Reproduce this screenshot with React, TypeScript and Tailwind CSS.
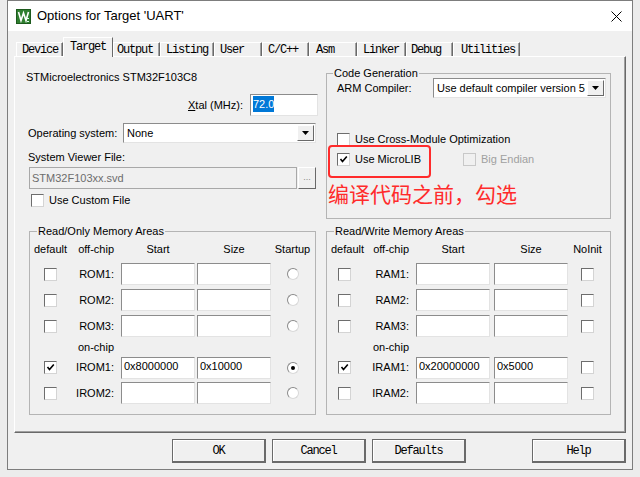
import React from "react";

const sans = "font-['Liberation_Sans',Arial,sans-serif]";
const mono = "font-['Liberation_Mono','Courier_New',monospace]";

const Check = ({ checked = false, disabled = false }: { checked?: boolean; disabled?: boolean }) => (
  <span
    className={
      disabled
        ? "flex h-[13px] w-[13px] shrink-0 items-center justify-center border border-[#c8c8c8] bg-[#f0f0f0]"
        : "flex h-[13px] w-[13px] shrink-0 items-center justify-center border border-t-[#6d6d6d] border-l-[#6d6d6d] border-b-[#d4d4d4] border-r-[#d4d4d4] bg-white"
    }
  >
    {checked && (
      <svg width="9" height="9" viewBox="0 0 9 9">
        <path d="M1.5 4 L3.5 6.5 L7.8 1.5" fill="none" stroke="#000" strokeWidth="1.6" />
      </svg>
    )}
  </span>
);

const Radio = ({ on = false }: { on?: boolean }) => (
  <span className="flex h-[12px] w-[12px] items-center justify-center rounded-full border border-t-[#8a8a8a] border-l-[#8a8a8a] border-b-[#d8d8d8] border-r-[#d8d8d8] bg-white">
    {on && <span className="h-[4px] w-[4px] rounded-full bg-black" />}
  </span>
);

const Field = ({ value = "", className = "" }: { value?: React.ReactNode; className?: string }) => (
  <div
    className={`flex h-[22px] shrink-0 items-center border border-t-[#8c8c8c] border-l-[#8c8c8c] border-b-[#e3e3e3] border-r-[#e3e3e3] bg-white pl-[2px] pb-[2px] ${className}`}
  >
    {value}
  </div>
);

const Arrow = () => (
  <span className="flex h-full w-[17px] items-center justify-center border border-t-white border-l-white border-b-[#696969] border-r-[#696969] bg-[#f0f0f0]">
    <svg width="7" height="4" viewBox="0 0 7 4">
      <path d="M0 0 H7 L3.5 4 Z" fill="#000" />
    </svg>
  </span>
);

const Select = ({ value, className }: { value: string; className: string }) => (
  <div
    className={`flex h-[20px] shrink-0 items-stretch border border-t-[#8c8c8c] border-l-[#8c8c8c] border-b-[#e3e3e3] border-r-[#e3e3e3] bg-white p-[1px] ${className}`}
  >
    <span className="flex flex-1 items-center pl-[2px]">{value}</span>
    <Arrow />
  </div>
);

const Btn = ({ label }: { label: string }) => (
  <div
    className={`flex h-[24px] w-[94px] items-center justify-center border border-[#6a6a6a] border-b-2 border-r-2 bg-[#f0f0f0] shadow-[inset_1px_1px_0_#fff] ${mono} text-[12px] tracking-[-1.2px] text-black`}
  >
    {label}
  </div>
);

const tabs: [string, string, string][] = [
  ["Device", "w-[47px]", "pl-[5px]"],
  ["Target", "w-[50px]", "pl-[6px]"],
  ["Output", "w-[47px]", "pl-[3px]"],
  ["Listing", "w-[54px]", "pl-[5px]"],
  ["User", "w-[48px]", "pl-[5px]"],
  ["C/C++", "w-[47px]", "pl-[5px]"],
  ["Asm", "w-[48px]", "pl-[6px]"],
  ["Linker", "w-[49px]", "pl-[5px]"],
  ["Debug", "w-[47px]", "pl-[4px]"],
  ["Utilities", "w-[67px]", "pl-[7px]"],
];

type Row = { label?: string; head?: string; checked?: boolean; start?: string; size?: string; on?: boolean; h: string };

const romRows: Row[] = [
  { label: "ROM1:", h: "h-[26px]" },
  { label: "ROM2:", h: "h-[26px]" },
  { label: "ROM3:", h: "h-[26px]" },
  { head: "on-chip", h: "h-[16px]" },
  { label: "IROM1:", checked: true, start: "0x8000000", size: "0x10000", on: true, h: "h-[25px]" },
  { label: "IROM2:", h: "h-[26px]" },
];

const ramRows: Row[] = [
  { label: "RAM1:", h: "h-[26px]" },
  { label: "RAM2:", h: "h-[26px]" },
  { label: "RAM3:", h: "h-[26px]" },
  { head: "on-chip", h: "h-[16px]" },
  { label: "IRAM1:", checked: true, start: "0x20000000", size: "0x5000", h: "h-[25px]" },
  { label: "IRAM2:", h: "h-[26px]" },
];

const MemGroup = ({
  title,
  rows,
  lastHead,
  radio,
  c1,
  c2,
  gap,
  last,
}: {
  title: string;
  rows: Row[];
  lastHead: string;
  radio: boolean;
  c1: string;
  c2: string;
  gap: string;
  last: string;
}) => (
  <div className="relative h-[184px] border border-[#b4b4b4] pt-[9px]">
    <span className="absolute -top-[8px] left-[7px] bg-[#f0f0f0] px-[1px] leading-[14px]">{title}</span>
    <div className="flex h-[16px] items-center whitespace-nowrap">
      <span className={`${c1} pl-[4px]`}>default</span>
      <span className={`${c2} text-right`}>off-chip</span>
      <span className="ml-[7px] w-[74px] text-center">Start</span>
      <span className={`${gap} w-[74px] text-center`}>Size</span>
      <span className={`${last} text-center`}>{lastHead}</span>
    </div>
    <div className="mt-[4px]">
      {rows.map((r, i) =>
        r.head ? (
          <div key={i} className={`flex ${r.h} items-center`}>
            <span className={c1} />
            <span className={`${c2} text-right whitespace-nowrap`}>{r.head}</span>
          </div>
        ) : (
          <div key={i} className={`flex ${r.h} items-center`}>
            <span className={`${c1} flex justify-center`}>
              <Check checked={r.checked} />
            </span>
            <span className={`${c2} text-right`}>{r.label}</span>
            <Field className="ml-[7px] w-[74px]" value={r.start} />
            <Field className={`${gap} w-[74px]`} value={r.size} />
            <span className={`${last} flex justify-center`}>{radio ? <Radio on={r.on} /> : <Check />}</span>
          </div>
        )
      )}
    </div>
  </div>
);

export default function App() {
  return (
    <div className={`h-[477px] w-[640px] bg-[#ececec] pl-[7px] ${sans} text-[11px] text-black`}>
      <div className="flex h-[470px] w-[626px] flex-col border border-[#7d7d7d] bg-[#f0f0f0]">
        {/* title bar */}
        <div className="flex h-[30px] shrink-0 items-center bg-white">
          <svg className="ml-[8px]" width="15" height="15" viewBox="0 0 15 15">
            <rect x="0" y="0" width="15" height="15" fill="#2f7f2f" />
            <rect x="0.5" y="0.5" width="14" height="14" fill="none" stroke="#1d5a1d" />
            <path d="M2.5 3 L5 11.5 L7.5 4 L10 11.5 L12.5 3" fill="none" stroke="#fff" strokeWidth="1.6" />
            <path d="M10.5 9.5 H13 M11 12.5 H13" stroke="#dfe" strokeWidth="1" />
          </svg>
          <span className="ml-[6px] text-[13px]">Options for Target 'UART'</span>
          <svg className="ml-auto mr-[10px]" width="11" height="11" viewBox="0 0 11 11">
            <path d="M0.5 0.5 L10.5 10.5 M10.5 0.5 L0.5 10.5" stroke="#000" strokeWidth="1" />
          </svg>
        </div>

        {/* tabs */}
        <div className={`ml-[8px] mt-[6px] flex h-[19px] items-end ${mono} text-[12px] tracking-[-1.2px]`}>
          {tabs.map(([t, w, pl]) =>
            t === "Target" ? (
              <div
                key={t}
                className={`relative z-10 -mb-px flex h-[20px] ${w} ${pl} items-center border-l border-t border-r border-l-white border-t-white border-r-[#696969] bg-[#f0f0f0] pb-[2px]`}
              >
                {t}
              </div>
            ) : (
              <div
                key={t}
                className={`flex h-[14px] ${w} ${pl} items-center border-l border-t border-r border-l-white border-t-white border-r-[#696969] bg-[#f0f0f0] shadow-[inset_-1px_0_0_#a0a0a0]`}
              >
                {t}
              </div>
            )
          )}
        </div>

        {/* panel */}
        <div className="mx-[6px] h-[377px] shrink-0 border border-t-white border-l-white border-b-[#696969] border-r-[#696969] pl-[14px] shadow-[inset_-1px_-1px_0_#a0a0a0]">
          <div className="flex h-[162px] gap-[10px]">
            {/* left column */}
            <div className="w-[287px] pt-[13px]">
              <div className="-ml-[3px] h-[14px] leading-[14px] whitespace-nowrap">STMicroelectronics STM32F103C8</div>
              <div className="-mr-[2px] mt-[10px] flex h-[22px] items-center justify-end">
                <span className="mr-[7px]">
                  <span className="underline">X</span>tal (MHz):
                </span>
                <Field className="w-[68px]" value={<span className="bg-[#0078d7] text-white">72.0</span>} />
              </div>
              <div className="-ml-[1px] mt-[7px] flex h-[20px] items-center">
                <span className="w-[96px]">Operating system:</span>
                <Select className="w-[193px]" value="None" />
              </div>
              <div className="-ml-[1px] mt-[7px] h-[14px] leading-[14px]">System Viewer File:</div>
              <div className="mt-[3px] flex h-[22px]">
                <div className="flex w-[270px] items-center border border-[#a8a8a8] bg-[#f0f0f0] pl-[2px] text-[#6d6d6d]">
                  STM32F103xx.svd
                </div>
                <div className="ml-px flex w-[18px] items-center justify-center border border-t-white border-l-white border-b-[#696969] border-r-[#696969] bg-[#f0f0f0] text-[9px] text-[#8a8a8a]">
                  ...
                </div>
              </div>
              <div className="mt-[4px] flex h-[14px] items-center pl-[2px]">
                <Check />
                <span className="ml-[5px]">Use Custom File</span>
              </div>
            </div>

            {/* right column */}
            <div className="w-[285px] pt-[16px]">
              <div className="relative h-[146px] border border-[#b4b4b4] pl-[10px] pt-[4px]">
                <span className="absolute -top-[8px] left-[6px] bg-[#f0f0f0] px-[1px] leading-[14px]">Code Generation</span>
                <div className="flex h-[20px] items-center">
                  <span className="w-[96px]">ARM Compiler:</span>
                  <Select className="w-[173px]" value="Use default compiler version 5" />
                </div>
                <div className="mt-[34px] flex h-[14px] items-center">
                  <Check />
                  <span className="ml-[5px]">Use Cross-Module Optimization</span>
                </div>
                <div className="mt-[6px] flex h-[14px] items-center">
                  <div className="flex w-[126px] items-center">
                    <Check checked />
                    <span className="ml-[5px]">Use MicroLIB</span>
                  </div>
                  <Check disabled />
                  <span className="ml-[5px] text-[#a0a0a0]">Big Endian</span>
                </div>
                <div className="-ml-[9px] mt-[14px] h-[26px] font-['Noto_Sans_CJK_SC',sans-serif] text-[21px] leading-[26px] text-[#ff2b2b]">
                  编译代码之前，勾选
                </div>
                <div className="absolute left-[1px] top-[71px] h-[33px] w-[103px] rounded-[4px] border-2 border-[#ff2b2b]" />
              </div>
            </div>
          </div>

          <div className="mt-[12px] flex gap-[10px]">
            <div className="w-[287px]">
              <MemGroup
                title="Read/Only Memory Areas"
                rows={romRows}
                lastHead="Startup"
                radio
                c1="w-[40px]"
                c2="w-[44px]"
                gap="ml-[2px]"
                last="w-[43px]"
              />
            </div>
            <div className="w-[285px]">
              <MemGroup
                title="Read/Write Memory Areas"
                rows={ramRows}
                lastHead="NoInit"
                radio={false}
                c1="w-[34px]"
                c2="w-[48px]"
                gap="ml-[4px]"
                last="w-[39px]"
              />
            </div>
          </div>
        </div>

        {/* buttons */}
        <div className="mt-[6px] flex h-[24px] pl-[164px]">
          <Btn label="OK" />
          <div className="ml-[6px]">
            <Btn label="Cancel" />
          </div>
          <div className="ml-[6px]">
            <Btn label="Defaults" />
          </div>
          <div className="ml-auto mr-[6px]">
            <Btn label="Help" />
          </div>
        </div>
      </div>
    </div>
  );
}
